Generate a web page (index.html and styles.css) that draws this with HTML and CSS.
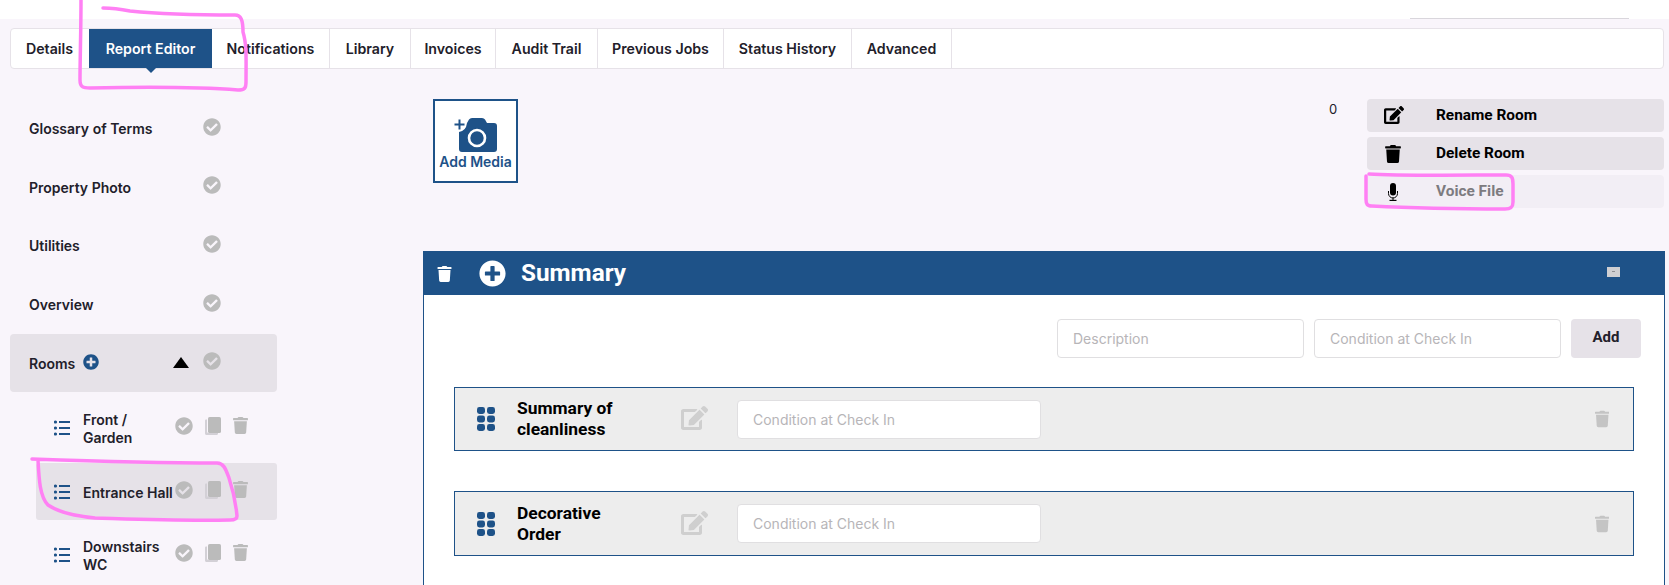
FILE: index.html
```html
<!DOCTYPE html>
<html lang="en">
<head>
<meta charset="utf-8">
<title>Report Editor</title>
<link rel="stylesheet" href="styles.css">
</head>
<body>
<svg class="defs" width="0" height="0" aria-hidden="true">
  <symbol id="i-check" viewBox="0 0 512 512"><path d="M504 256c0 136.967-111.033 248-248 248S8 392.967 8 256 119.033 8 256 8s248 111.033 248 248zM227.314 387.314l184-184c6.248-6.248 6.248-16.379 0-22.627l-22.627-22.627c-6.248-6.249-16.379-6.249-22.628 0L216 308.118l-70.059-70.059c-6.248-6.248-16.379-6.248-22.628 0l-22.627 22.627c-6.248 6.248-6.248 16.379 0 22.627l104 104c6.249 6.249 16.379 6.249 22.628.001z"/></symbol>
  <symbol id="i-plus" viewBox="0 0 512 512"><path d="M256 8C119 8 8 119 8 256s111 248 248 248 248-111 248-248S393 8 256 8zm144 276c0 6.6-5.4 12-12 12h-92v92c0 6.6-5.4 12-12 12h-56c-6.6 0-12-5.4-12-12v-92h-92c-6.6 0-12-5.4-12-12v-56c0-6.6 5.4-12 12-12h92v-92c0-6.6 5.4-12 12-12h56c6.6 0 12 5.4 12 12v92h92c6.6 0 12 5.4 12 12v56z"/></symbol>
  <symbol id="i-trash" viewBox="0 0 448 512"><path d="M432 32H312l-9.4-18.7A24 24 0 0 0 281.1 0H166.8a23.72 23.72 0 0 0-21.4 13.3L136 32H16A16 16 0 0 0 0 48v32a16 16 0 0 0 16 16h416a16 16 0 0 0 16-16V48a16 16 0 0 0-16-16zM53.2 467a48 48 0 0 0 47.9 45h245.8a48 48 0 0 0 47.9-45L416 128H32z"/></symbol>
  <symbol id="i-edit" viewBox="0 0 576 512"><path d="M402.6 83.2l90.2 90.2c3.8 3.8 3.8 10 0 13.8L274.4 405.6l-92.8 10.3c-12.4 1.4-22.9-9.1-21.5-21.5l10.3-92.8L388.8 83.2c3.8-3.8 10-3.8 13.8 0zm162-22.9l-48.8-48.8c-15.2-15.2-39.9-15.2-55.2 0l-35.4 35.4c-3.8 3.8-3.8 10 0 13.8l90.2 90.2c3.8 3.8 10 3.8 13.8 0l35.4-35.4c15.2-15.3 15.2-40 0-55.2zM384 346.2V448H64V128h229.8c3.2 0 6.2-1.3 8.5-3.5l40-40c7.6-7.6 2.2-20.5-8.5-20.5H48C21.5 64 0 85.5 0 112v352c0 26.5 21.5 48 48 48h352c26.5 0 48-21.5 48-48V306.2c0-10.7-12.9-16-20.5-8.5l-40 40c-2.2 2.3-3.5 5.3-3.5 8.5z"/></symbol>
  <symbol id="i-mic" viewBox="0 0 10 18"><rect x="2" y="0" width="6" height="12.500" rx="3"/><path d="M.5 8v2.500a4.500 4.500 0 0 0 9 0V8" fill="none" stroke="currentColor" stroke-width="1"/><rect x="4.500" y="14.500" width="1" height="2.500"/><rect x="1.500" y="16.800" width="7" height="1.200"/></symbol>
  <symbol id="i-copy" viewBox="0 0 16 18"><path class="copy-back" d="M2 2.500H1.200C.5 2.500 0 3 0 3.700v12.800C0 17.300.7 18 1.500 18h10.300c.7 0 1.200-.5 1.200-1.200V16H3.500C2.700 16 2 15.300 2 14.500z"/><rect x="3" width="13" height="16" rx="1.600"/></symbol>
  <symbol id="i-list" viewBox="0 0 16 16"><circle cx="1.500" cy="2" r="1.600"/><circle cx="1.500" cy="8" r="1.600"/><circle cx="1.500" cy="14" r="1.600"/><rect x="5" y="1" width="11" height="2"/><rect x="5" y="7" width="11" height="2"/><rect x="5" y="13" width="11" height="2"/></symbol>
  <symbol id="i-grip" viewBox="0 0 18 24"><rect width="8" height="7" rx="2.400"/><rect x="10" width="8" height="7" rx="2.400"/><rect y="8.500" width="8" height="7" rx="2.400"/><rect x="10" y="8.500" width="8" height="7" rx="2.400"/><rect y="17" width="8" height="7" rx="2.400"/><rect x="10" y="17" width="8" height="7" rx="2.400"/></symbol>
  <symbol id="i-camera" viewBox="0 0 43 34"><path d="M13 5l2-3.500Q16 0 18 0h10q2 0 3 1.500L33 5h7q3 0 3 3v23q0 3-3 3H8q-3 0-3-3V14q7-1 8-9z"/><circle cx="23" cy="20" r="8" fill="none" stroke="#fff" stroke-width="2.600"/><path d="M4.500 1.500h2v4h4v2h-4v4h-2v-4h-4v-2h4z"/></symbol>
</svg>

<header class="topband"><span class="topband-line"></span></header>

<nav class="tabs">
  <a class="tab tab-first">Details</a>
  <a class="tab tab-active">Report Editor</a>
  <a class="tab tab-notif">Notifications</a>
  <a class="tab tab-lib">Library</a>
  <a class="tab tab-inv">Invoices</a>
  <a class="tab tab-audit">Audit Trail</a>
  <a class="tab tab-prev">Previous Jobs</a>
  <a class="tab tab-status">Status History</a>
  <a class="tab tab-adv">Advanced</a>
</nav>

<div class="columns">
  <aside class="sidebar">
    <div class="side-row"><span class="side-label">Glossary of Terms</span><svg class="ic ic-check"><use href="#i-check"/></svg></div>
    <div class="side-row"><span class="side-label">Property Photo</span><svg class="ic ic-check"><use href="#i-check"/></svg></div>
    <div class="side-row"><span class="side-label">Utilities</span><svg class="ic ic-check"><use href="#i-check"/></svg></div>
    <div class="side-row"><span class="side-label">Overview</span><svg class="ic ic-check"><use href="#i-check"/></svg></div>
    <div class="side-row side-rooms">
      <span class="rooms-label">Rooms</span>
      <svg class="ic ic-rooms-plus"><use href="#i-plus"/></svg>
      <span class="triangle"></span>
      <svg class="ic ic-check"><use href="#i-check"/></svg>
    </div>
    <div class="room room-front">
      <svg class="ic ic-list"><use href="#i-list"/></svg>
      <span class="room-label">Front / Garden</span>
      <svg class="ic ic-check"><use href="#i-check"/></svg>
      <svg class="ic ic-copy"><use href="#i-copy"/></svg>
      <svg class="ic ic-room-trash"><use href="#i-trash"/></svg>
    </div>
    <div class="room room-hall">
      <svg class="ic ic-list"><use href="#i-list"/></svg>
      <span class="room-label">Entrance Hall</span>
      <svg class="ic ic-check"><use href="#i-check"/></svg>
      <svg class="ic ic-copy"><use href="#i-copy"/></svg>
      <svg class="ic ic-room-trash"><use href="#i-trash"/></svg>
    </div>
    <div class="room room-wc">
      <svg class="ic ic-list"><use href="#i-list"/></svg>
      <span class="room-label">Downstairs WC</span>
      <svg class="ic ic-check"><use href="#i-check"/></svg>
      <svg class="ic ic-copy"><use href="#i-copy"/></svg>
      <svg class="ic ic-room-trash"><use href="#i-trash"/></svg>
    </div>
  </aside>

  <main class="main">
    <section class="toprow">
      <button class="media">
        <svg class="ic ic-camera"><use href="#i-camera"/></svg>
        <span>Add Media</span>
      </button>
      <span class="count">0</span>
      <div class="actions">
        <button class="action"><svg class="ic ic-act-edit"><use href="#i-edit"/></svg><span>Rename Room</span></button>
        <button class="action"><svg class="ic ic-act-trash"><use href="#i-trash"/></svg><span>Delete Room</span></button>
        <button class="action action-off"><svg class="ic ic-act-mic"><use href="#i-mic"/></svg><span>Voice File</span></button>
      </div>
    </section>

    <section class="panel">
      <div class="panel-head">
        <svg class="ic ic-head-trash"><use href="#i-trash"/></svg>
        <svg class="ic ic-head-plus"><use href="#i-plus"/></svg>
        <h2 class="panel-title">Summary</h2>
        <span class="collapse"></span>
      </div>
      <div class="panel-body">
        <div class="addform">
          <input class="field field-wide" placeholder="Description">
          <input class="field field-wide" placeholder="Condition at Check In">
          <button class="add">Add</button>
        </div>
        <div class="item">
          <svg class="ic ic-grip"><use href="#i-grip"/></svg>
          <span class="item-name">Summary of cleanliness</span>
          <svg class="ic ic-item-edit"><use href="#i-edit"/></svg>
          <input class="field field-item" placeholder="Condition at Check In">
          <svg class="ic ic-item-trash"><use href="#i-trash"/></svg>
        </div>
        <div class="item">
          <svg class="ic ic-grip"><use href="#i-grip"/></svg>
          <span class="item-name">Decorative Order</span>
          <svg class="ic ic-item-edit"><use href="#i-edit"/></svg>
          <input class="field field-item" placeholder="Condition at Check In">
          <svg class="ic ic-item-trash"><use href="#i-trash"/></svg>
        </div>
      </div>
    </section>
  </main>
</div>

<svg class="scribble" viewBox="0 0 1669 585" aria-hidden="true">
  <path d="M81 0C81 30 80 60 80 80C80 87 83 88 90 88C140 87 200 87 238 90C245 90 246 88 246 82C246 60 247 45 243 32C243 20 241 15 235 15C200 15 160 14 130 11C120 9 112 8 103 8"/>
  <path d="M32 459C90 461 160 463 217 463C224 463 226 470 229 478C233 490 236 505 237 516C237 519 235 520 230 520C180 521 130 519 95 518C75 516 58 512 48 505C40 497 39 480 38 460"/>
  <path d="M1369 174C1400 176 1470 175 1506 175C1512 175 1513 178 1513 184V202C1513 207 1511 209 1505 209C1470 209 1410 208 1372 206C1367 206 1366 204 1366 199V176"/>
</svg>
</body>
</html>
```

FILE: styles.css
```css
* { box-sizing: border-box; }
html, body { margin: 0; padding: 0; }
body {
  width: 1669px;
  height: 585px;
  overflow: hidden;
  position: relative;
  background: #f9f5fb;
  font-family: "Inter", "Liberation Sans", sans-serif;
  color: #22202a;
}
button, input { font: inherit; }
.defs { position: absolute; }
.ic { display: block; flex: none; fill: #bbb; }

/* top band */
.topband {
  height: 19px;
  background: #fff;
  display: flex;
  justify-content: flex-end;
  align-items: flex-end;
  padding-right: 40px;
}
.topband-line { width: 219px; height: 1px; background: #d9d6dc; }

/* tabs */
.tabs {
  display: flex;
  height: 41px;
  margin: 9px 5px 0 10px;
  background: #fff;
  border: 1px solid #e6e2e8;
  border-radius: 4px;
}
.tab {
  display: flex;
  align-items: center;
  justify-content: center;
  font-size: 14.200px;
  font-weight: 600;
  border-right: 1px solid #e6e2e8;
}
.tab-first { width: 77px; border-right: 0; }
.tab-active {
  width: 123px;
  margin-left: 1px;
  position: relative;
  background: #1e5288;
  color: #fff;
  border-right: 0;
}
.tab-active::after {
  content: "";
  position: absolute;
  left: 50%;
  bottom: -5px;
  margin-left: -5px;
  border-left: 5px solid transparent;
  border-right: 5px solid transparent;
  border-top: 5px solid #1e5288;
}
.tab-notif { width: 118px; }
.tab-lib { width: 81px; }
.tab-inv { width: 85px; }
.tab-audit { width: 102px; }
.tab-prev { width: 126px; }
.tab-status { width: 128px; }
.tab-adv { width: 100px; }

/* columns */
.columns { display: flex; padding: 30px 4px 0 10px; }
.sidebar { width: 267px; flex: none; margin-top: 1px; }
.main { width: 1242px; flex: none; margin-left: 146px; }

/* sidebar */
.side-row {
  height: 58.600px;
  display: flex;
  align-items: center;
  padding-left: 19px;
  font-size: 14px;
  font-weight: 600;
}
.side-label { width: 174px; margin-bottom: 1px; }
.ic-check { width: 18px; height: 18px; margin-bottom: 5px; }
.side-rooms { height: 58px; background: #e6e2e8; border-radius: 4px; }
.rooms-label { width: 54px; }
.ic-rooms-plus { width: 16px; height: 16px; fill: #1e5288; margin-bottom: 2px; }
.triangle {
  margin: 0 14px 2px 74px;
  border-left: 8px solid transparent;
  border-right: 8px solid transparent;
  border-bottom: 11px solid #000;
}
.side-rooms .ic-check { margin-bottom: 4px; }

.room {
  margin-left: 26px;
  display: flex;
  align-items: center;
  padding-left: 18px;
  font-size: 14px;
  font-weight: 600;
  line-height: 18px;
  border-radius: 3px;
}
.room-front { height: 71px; }
.room-hall { height: 57px; background: #e6e2e8; }
.room-wc { height: 68px; }
.ic-list { width: 16px; height: 16px; fill: #1e5288; margin-top: 1px; }
.room-label { width: 92px; margin-left: 13px; margin-top: 3px; }
.room-hall .room-label { white-space: nowrap; }
.room .ic-check { margin: 0 12px 3px 0; }
.ic-copy { width: 16px; height: 18px; margin: 0 12px 3px 0; }
.copy-back { fill: #d3d0d6; }
.ic-room-trash { width: 15px; height: 17px; margin-bottom: 4px; }

/* top row of main */
.toprow {
  height: 152px;
  display: flex;
  align-items: flex-start;
  padding-left: 10px;
}
.media {
  width: 85px;
  height: 84px;
  padding: 17px 0 0;
  display: flex;
  flex-direction: column;
  align-items: center;
  background: #fff;
  border: 2px solid #1e5288;
  color: #1e5288;
  font-size: 14px;
  font-weight: 600;
  white-space: nowrap;
}
.ic-camera { width: 43px; height: 34px; fill: #1e5288; margin: 0 0 1px 0; }
.count { margin: 2px 0 0 811px; width: 38px; font-size: 13px; line-height: 16px; }
.actions { display: flex; flex-direction: column; gap: 5px; width: 297px; }
.action {
  position: relative;
  height: 33px;
  display: flex;
  align-items: center;
  padding: 0 0 1px 69px;
  background: #e6e2e8;
  border: 0;
  border-radius: 4px;
  color: #000;
  font-family: "Roboto", "Liberation Sans", sans-serif;
  font-size: 15.400px;
  font-weight: 700;
}
.action-off { background: #f2eef5; color: #7d7b80; }
.action .ic { position: absolute; fill: #000; color: #000; }
.ic-act-edit { left: 17px; top: 7px; width: 20px; height: 18px; }
.ic-act-trash { left: 18px; top: 8px; width: 16px; height: 18px; }
.ic-act-mic { left: 21px; top: 8px; width: 10px; height: 18px; }

/* panel */
.panel {
  height: 360px;
  border: 1px solid #1e5288;
  background: #fff;
}
.panel-head {
  height: 43px;
  display: flex;
  align-items: center;
  background: #1e5288;
  color: #fff;
}
.ic-head-trash { width: 15px; height: 16px; fill: #fff; margin-left: 13px; }
.ic-head-plus { width: 27px; height: 27px; fill: #fff; margin-left: 27px; }
.panel-title {
  margin: 0 0 3px 15px;
  font-family: "Roboto", "Liberation Sans", sans-serif;
  font-size: 24.300px;
  font-weight: 700;
}
.collapse {
  position: relative;
  width: 13px;
  height: 10px;
  margin: 0 44px 3px auto;
  background: #cfcfd2;
}
.collapse::after {
  content: "";
  position: absolute;
  left: 5px;
  top: 4px;
  width: 3px;
  height: 1px;
  background: #8f8f92;
}
.panel-body { padding: 24px 30px 0; }
.addform { display: flex; gap: 10px; justify-content: flex-end; margin-right: -7px; }
.field {
  height: 39px;
  padding: 0 15px;
  border: 1px solid #e0dfe1;
  border-radius: 4px;
  background: #fff;
  font-size: 14px;
  color: #222;
  outline: 0;
}
.field::placeholder { color: #b7b5b8; }
.field-wide { width: 247px; }
.add {
  width: 70px;
  height: 39px;
  border: 0;
  border-radius: 4px;
  background: #e6e2e8;
  color: #22202a;
  font-family: "Roboto", "Liberation Sans", sans-serif;
  font-size: 15px;
  font-weight: 700;
  padding: 0 0 4px;
}
.item {
  height: 64px;
  margin-top: 29px;
  display: flex;
  align-items: center;
  padding: 0 24px 0 22px;
  background: #ededed;
  border: 1px solid #1e5288;
}
.item + .item { height: 65px; margin-top: 40px; }
.ic-grip { width: 18px; height: 24px; fill: #1e5288; }
.item-name {
  width: 164px;
  margin-left: 22px;
  padding-right: 40px;
  color: #000;
  font-family: "Roboto", "Liberation Sans", sans-serif;
  font-size: 17.400px;
  font-weight: 700;
  line-height: 21px;
}
.ic-item-edit { width: 27px; height: 24px; fill: #cfcfcf; margin-bottom: 2px; }
.field-item { width: 304px; margin-left: 29px; }
.ic-item-trash { width: 14.500px; height: 18px; fill: #c4c4c4; margin-left: auto; }

/* marker annotations drawn over the screenshot */
.scribble {
  position: absolute;
  left: 0;
  top: 0;
  width: 1669px;
  height: 585px;
  pointer-events: none;
}
.scribble path {
  fill: none;
  stroke: #ff80f4;
  stroke-width: 3.500px;
  stroke-linecap: round;
  stroke-linejoin: round;
}
```
